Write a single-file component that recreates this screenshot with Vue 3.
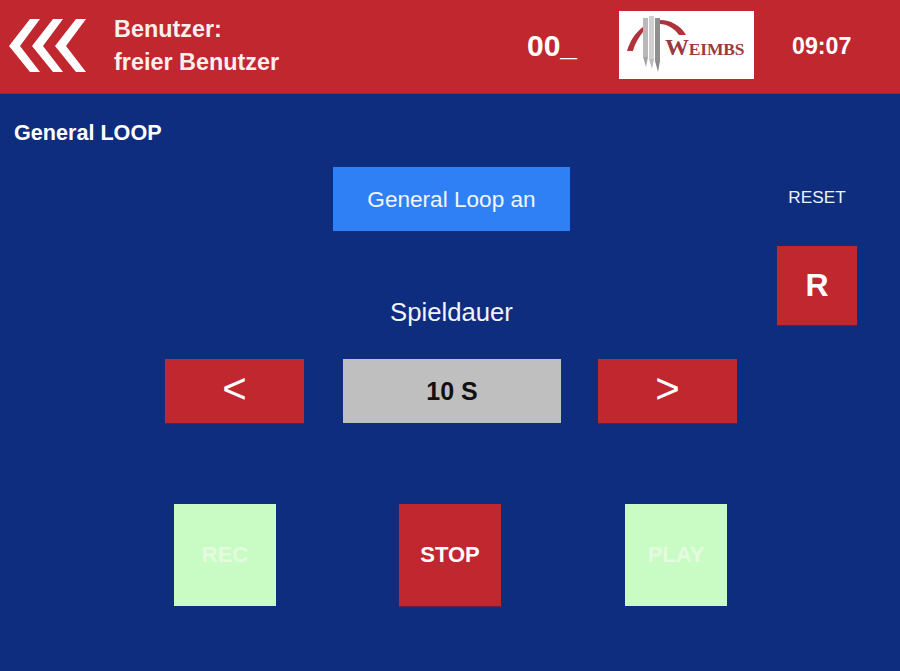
<script setup>
const transport = [
  { label: 'REC', kind: 'pale' },
  { label: 'STOP', kind: 'red' },
  { label: 'PLAY', kind: 'pale' }
]
</script>

<template>
  <div class="screen">
    <header class="top">
      <button class="back" aria-label="Zurück">
        <svg width="78" height="56" viewBox="0 0 78 56">
          <g fill="#fff">
            <path d="M0 27 L21 0 H31 L11 27 L31 53 H21 Z" />
            <path d="M23 27 L44 0 H54 L34 27 L54 53 H44 Z" />
            <path d="M46 27 L67 0 H77 L57 27 L77 53 H67 Z" />
          </g>
        </svg>
      </button>
      <div class="user">
        <div>Benutzer:</div>
        <div>freier Benutzer</div>
      </div>
      <div class="code">00_</div>
      <div class="logo">
        <svg width="135" height="68" viewBox="0 0 135 68">
          <path d="M8 40 C11 30 16 22 24 16 L24 21 C20 26 16 32 14 40 Z" fill="#b0323a" />
          <path d="M41 9 C52 9 62 15 67 24 L60 24 C55 17 48 13 41 13 Z" fill="#b0323a" />
          <g>
            <rect x="24" y="7" width="5" height="39" fill="#b9b9b9" />
            <rect x="30" y="5" width="5" height="43" fill="#cfcfcf" />
            <rect x="36" y="7" width="5" height="43" fill="#8f8f8f" />
            <path d="M24 46 L29 46 L27 56 Z" fill="#a5a5a5" />
            <path d="M30 48 L35 48 L33 58 Z" fill="#bbb" />
            <path d="M36 50 L41 50 L39 61 Z" fill="#8a8a8a" />
          </g>
          <text x="46" y="44" class="logo-text"><tspan class="logo-w">W</tspan>EIMBS</text>
        </svg>
      </div>
      <div class="clock">09:07</div>
    </header>

    <main class="body">
      <h1 class="title">General LOOP</h1>

      <div class="loop-row">
        <button class="loop-btn">General Loop an</button>
        <div class="reset-label">RESET</div>
      </div>

      <div class="duration-row">
        <div class="duration-label">Spieldauer</div>
        <button class="reset-btn">R</button>
      </div>

      <div class="stepper">
        <button class="step">&lt;</button>
        <div class="value">10 S</div>
        <button class="step">&gt;</button>
      </div>

      <div class="transport">
        <button
          v-for="item in transport"
          :key="item.label"
          class="square"
          :class="item.kind"
        >{{ item.label }}</button>
      </div>
    </main>
  </div>
</template>

<style>
html, body { margin: 0; padding: 0; }
</style>

<style scoped>
.screen {
  width: 900px;
  height: 671px;
  display: flex;
  flex-direction: column;
  overflow: hidden;
  background: #0f2d7e;
  color: #fff;
  font-family: "Liberation Sans", Arial, sans-serif;
}
button {
  font-family: inherit;
  border: 0;
  padding: 0;
  color: #fff;
  cursor: pointer;
}
.top {
  height: 93px;
  flex: none;
  display: flex;
  align-items: center;
  background: #c0272f;
  box-shadow: 0 1px 0 #7d2a4e;
  position: relative;
}
.back {
  background: none;
  margin-left: 9px;
  width: 78px;
  height: 56px;
  display: block;
  line-height: 0;
}
.user {
  margin-left: 27px;
  width: 413px;
  font-size: 23.4px;
  font-weight: 700;
  line-height: 33px;
  color: #fbeeee;
  margin-bottom: 2px;
}
.code {
  width: 92px;
  font-size: 30px;
  font-weight: 700;
  margin-bottom: 2px;
}
.logo {
  width: 135px;
  height: 68px;
  background: #fff;
  line-height: 0;
  margin-bottom: 3px;
}
.logo-text {
  font-family: "Liberation Serif", serif;
  font-size: 17.5px;
  font-weight: 700;
  fill: #9c3a42;
  letter-spacing: -0.2px;
}
.logo-w { font-size: 24px; }
.clock {
  margin-left: 38px;
  font-size: 23.2px;
  font-weight: 700;
}
.body {
  flex: 1;
  display: flex;
  flex-direction: column;
}
.title {
  margin: 28px 0 0 14px;
  font-size: 21.6px;
  line-height: 24px;
  font-weight: 700;
}
.loop-row {
  margin-top: 22px;
  height: 64px;
  display: flex;
  align-items: center;
}
.loop-btn {
  margin-left: 333px;
  width: 237px;
  height: 64px;
  padding-top: 1px;
  background: #2f80f4;
  font-size: 22.6px;
  color: #f0f5ff;
}
.reset-label {
  margin-left: 207px;
  width: 80px;
  text-align: center;
  font-size: 17.2px;
  color: #eef2fb;
  margin-bottom: 4px;
}
.duration-row {
  margin-top: 14px;
  height: 80px;
  display: flex;
  align-items: flex-end;
}
.duration-label {
  margin-left: 333px;
  width: 237px;
  text-align: center;
  font-size: 25.7px;
  line-height: 28px;
  margin-bottom: -1px;
  color: #f2f4fb;
}
.reset-btn {
  margin-left: 207px;
  width: 80px;
  height: 79px;
  background: #c0272f;
  font-size: 32px;
  font-weight: 700;
  box-shadow: 0 1px 1px #5d2050;
}
.stepper {
  margin-top: 34px;
  margin-left: 165px;
  display: flex;
  align-items: stretch;
  height: 64px;
}
.step {
  width: 139px;
  background: #c0272f;
  font-size: 42px;
  line-height: 58px;
  padding-bottom: 4px;
  box-shadow: 0 1px 1px #5d2050;
}
.value {
  width: 218px;
  margin: 0 37px 0 39px;
  display: flex;
  align-items: center;
  justify-content: center;
  background: #bfbfbf;
  color: #111;
  font-size: 25px;
  font-weight: 700;
}
.transport {
  margin-top: 81px;
  margin-left: 174px;
  display: flex;
  gap: 123px;
}
.square {
  width: 102px;
  height: 102px;
  font-size: 22px;
  font-weight: 700;
}
.square:last-child { margin-left: 1px; }
.pale {
  background: #c8fcc4;
  color: #e4fbe0;
}
.red {
  background: #c0272f;
  box-shadow: 0 1px 1px #5d2050;
}
</style>
